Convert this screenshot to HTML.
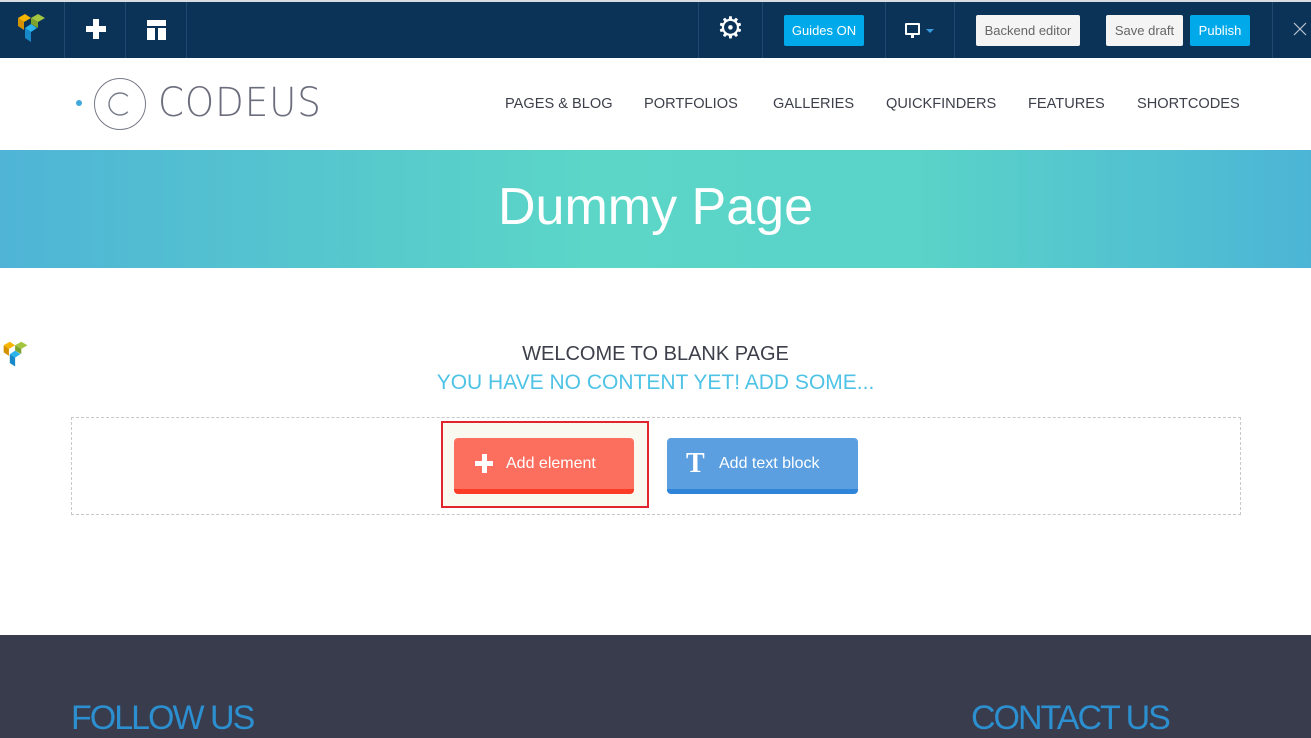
<!DOCTYPE html>
<html><head><meta charset="utf-8"><style>
*{margin:0;padding:0;box-sizing:border-box}
body{width:1311px;height:738px;overflow:hidden;font-family:"Liberation Sans",sans-serif;background:#fff;position:relative}
.bar{position:absolute;top:0;left:0;width:1311px;height:58px;background:#0b3358;border-top:2px solid #d8dde2}
.sep{position:absolute;top:0;width:1px;height:56px;background:#1e4a70}
.btn{position:absolute;top:13px;height:31px;line-height:31px;font-size:13px;text-align:center;border-radius:2px}
.nav{position:absolute;top:96px;font-size:14.6px;color:#3d3f4a}
.hero{position:absolute;top:150px;left:0;width:1311px;height:118px;background:linear-gradient(90deg,#4fb4d6 0%,#5bd6c7 45%,#5ad3c8 70%,#4cb5d6 100%);color:#fff;font-size:52px;font-weight:300;text-align:center;line-height:114px}
.foot{position:absolute;top:635px;left:0;width:1311px;height:103px;background:#393c4d}
</style></head><body>
<div class="bar">
 <svg style="position:absolute;left:17px;top:10px" width="30" height="34" viewBox="0 0 30 34"><path d="M1 6l7-4 6 4-7 4z" fill="#f7b500"/><path d="M1 6v8l6 4v-8z" fill="#d59200"/><path d="M14 6l7-4 7 4-7 4z" fill="#a4c540"/><path d="M14 6v6l7 4v-6z" fill="#7ea32c"/><path d="M8 16l6-4 6 4-6 4z" fill="#2bb3ea"/><path d="M8 16v10l6 4V20z" fill="#1789c9"/></svg>
 <div class="sep" style="left:64px"></div>
 <div style="position:absolute;left:86px;top:24px;width:20px;height:6px;background:#fff"></div>
 <div style="position:absolute;left:93px;top:17px;width:6px;height:20px;background:#fff"></div>
 <div class="sep" style="left:125px"></div>
 <div style="position:absolute;left:147px;top:18px;width:19px;height:6px;background:#fff"></div>
 <div style="position:absolute;left:147px;top:26px;width:8px;height:12px;background:#fff"></div>
 <div style="position:absolute;left:158px;top:26px;width:8px;height:12px;background:#fff"></div>
 <div class="sep" style="left:186px"></div>
 <div class="sep" style="left:698px"></div>
 <div style="position:absolute;left:717px;top:12px;color:#fff;font-size:30px;line-height:30px">&#9881;</div>
 <div class="sep" style="left:762px"></div>
 <div class="btn" style="left:784px;width:80px;background:#00a9ea;color:#fff">Guides ON</div>
 <div class="sep" style="left:885px"></div>
 <div style="position:absolute;left:905px;top:21px;width:15px;height:12px;border:2px solid #fff;border-radius:1px"></div>
 <div style="position:absolute;left:911px;top:33px;width:3px;height:3px;background:#fff"></div>
 <div style="position:absolute;left:926px;top:27px;border:4px solid transparent;border-top:4px solid #3a9be0"></div>
 <div class="sep" style="left:954px"></div>
 <div class="btn" style="left:976px;width:104px;background:#f4f4f4;color:#666">Backend editor</div>
 <div class="btn" style="left:1106px;width:77px;background:#f4f4f4;color:#666">Save draft</div>
 <div class="btn" style="left:1190px;width:60px;background:#00a9ea;color:#fff">Publish</div>
 <div class="sep" style="left:1272px"></div>
 <svg style="position:absolute;left:1293px;top:20px" width="14" height="14"><path d="M1 1L13 13M13 1L1 13" stroke="#bcc7d2" stroke-width="1.2"/></svg>
</div>
<div style="position:absolute;left:76px;top:100px;width:6px;height:6px;border-radius:50%;background:#3fa9d9"></div>
<div style="position:absolute;left:94px;top:78px;width:52px;height:52px;border-radius:50%;border:1.3px solid #777a88"></div>
<svg style="position:absolute;left:107px;top:91px" width="26" height="26" viewBox="0 0 26 26"><path d="M20.8 5.2A11 11 0 1 0 20.8 20.8" fill="none" stroke="#777a88" stroke-width="1.4"/></svg>
<div style="position:absolute;left:158px;top:80px;font-size:40px;font-weight:300;color:#6b6d7c;letter-spacing:1px;font-family:'DejaVu Sans',sans-serif;transform:scaleX(.93);transform-origin:left">CODEUS</div>
<div class="nav" style="left:505px">PAGES &amp; BLOG</div>
<div class="nav" style="left:644px">PORTFOLIOS</div>
<div class="nav" style="left:773px">GALLERIES</div>
<div class="nav" style="left:886px">QUICKFINDERS</div>
<div class="nav" style="left:1028px">FEATURES</div>
<div class="nav" style="left:1137px">SHORTCODES</div>
<div class="hero">Dummy Page</div>
<svg style="position:absolute;left:2px;top:340px" width="28" height="30" viewBox="0 0 30 34"><path d="M1 6l7-4 6 4-7 4z" fill="#f7b500"/><path d="M1 6v8l6 4v-8z" fill="#d59200"/><path d="M14 6l7-4 7 4-7 4z" fill="#a4c540"/><path d="M14 6v6l7 4v-6z" fill="#7ea32c"/><path d="M8 16l6-4 6 4-6 4z" fill="#2bb3ea"/><path d="M8 16v10l6 4V20z" fill="#1789c9"/></svg>
<div style="position:absolute;top:343px;left:0;width:1311px;text-align:center;font-size:20px;color:#3d3f4a;font-weight:300">WELCOME TO BLANK PAGE</div>
<div style="position:absolute;top:371px;left:0;width:1311px;text-align:center;font-size:21px;color:#4ec3e6;font-weight:300">YOU HAVE NO CONTENT YET! ADD SOME...</div>
<div style="position:absolute;left:71px;top:417px;width:1170px;height:98px;border:1px dashed #c8c8c8"></div>
<div style="position:absolute;left:441px;top:421px;width:208px;height:87px;border:2px solid #e0262c;background:#faf9ef"></div>
<div style="position:absolute;left:454px;top:438px;width:180px;height:56px;border-radius:4px;background:#fc6f5f;border-bottom:5px solid #fc3b26;color:#fff;font-size:16px;line-height:51px;padding-left:52px">Add element</div>
<div style="position:absolute;left:475px;top:461px;width:18px;height:5px;background:#fff"></div>
<div style="position:absolute;left:482px;top:454px;width:5px;height:19px;background:#fff"></div>
<div style="position:absolute;left:667px;top:438px;width:191px;height:56px;border-radius:4px;background:#5b9fe0;border-bottom:5px solid #2f86d9;color:#fff;font-size:16px;line-height:51px;padding-left:52px">Add text block</div>
<div style="position:absolute;left:686px;top:448px;color:#fff;font-size:28px;font-weight:bold;font-family:'Liberation Serif',serif;line-height:32px">T</div>
<div class="foot">
 <div style="position:absolute;left:71px;top:64px;font-size:34px;color:#2c8fd0;font-weight:300;letter-spacing:-2px">FOLLOW US</div>
 <div style="position:absolute;left:971px;top:64px;font-size:34px;color:#2c8fd0;font-weight:300;letter-spacing:-2px">CONTACT US</div>
</div>
</body></html>
